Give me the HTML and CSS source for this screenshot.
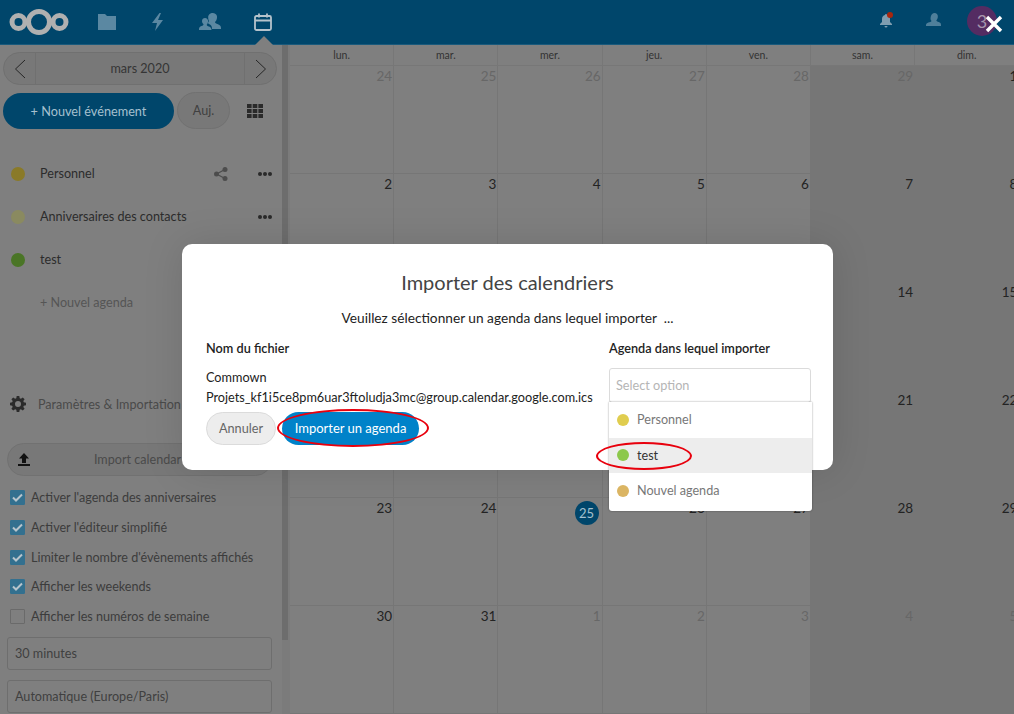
FILE: index.html
```html
<!DOCTYPE html>
<html lang="fr">
<head>
<meta charset="utf-8">
<title>Agenda</title>
<link rel="stylesheet" href="styles.css">
</head>
<body>
<header class="topbar">
  <svg class="logo" width="62" height="30" viewBox="0 0 62 30"><g fill="none" stroke="#b0b0b0"><circle cx="9.500" cy="15" r="6.500" stroke-width="5"/><circle cx="30" cy="15" r="10.500" stroke-width="5"/><circle cx="50.500" cy="15" r="6.500" stroke-width="5"/></g></svg>
  <nav class="apps">
    <svg class="app" width="20" height="20" viewBox="0 0 20 20"><path fill="#5b88a2" d="M1 2h7l2 2h9v14H1z"/></svg>
    <svg class="app" width="20" height="20" viewBox="0 0 20 20"><path fill="#5b88a2" d="M11.500 1 4 11h5l-2 8 8-11h-5l3-7z"/></svg>
    <svg class="app" width="22" height="20" viewBox="0 0 22 20"><path fill="#5b88a2" d="M14 1a4.200 4.200 0 0 1 4 5c-.3 2-1 3-2 4 0 1 1 1.500 3 2.300 2 .8 3 1.700 3 3.700v1h-9c0-3-1-4-3-5-1.500-.7-1-1.500 0-3-.5-1-.8-1.800-.8-3.500C9 3 11 1 14 1zM6 6a3.200 3.200 0 0 1 3 4c-.2 1.300-.6 2-1.300 2.700 0 .8.800 1.200 2.300 1.800 1.500.7 2.500 1.500 2.500 3.500H0v-1c0-1.500.8-2.500 2.500-3 1.500-.5 2-1 2-1.800C3.700 11.500 3 10.500 3 9c0-1.700 1.300-3 3-3z"/></svg>
    <div class="app-active">
      <svg width="18" height="18" viewBox="0 0 18 18"><g fill="none" stroke="#b5c3cc" stroke-width="1.800"><rect x="1" y="3" width="16" height="14" rx="1.500"/><path d="M1 7.500h16M5 .5v4M13 .5v4"/></g></svg>
      <span class="caret"></span>
    </div>
  </nav>
  <div class="top-right">
    <span class="bell">
      <svg width="15" height="15" viewBox="0 0 15 15"><path fill="#7f9db0" d="M7 1a1 1 0 0 1 1 1c2 .5 3 2 3 4v3l2 2v1H1v-1l2-2V6c0-2 1-3.500 3-4a1 1 0 0 1 1-1zM5.500 13h3a1.500 1.500 0 0 1-3 0z"/></svg>
      <span class="bell-dot"></span>
    </span>
    <svg class="people" width="15" height="15" viewBox="0 0 15 15"><path fill="#4f7f9a" d="M8.500 0a3.500 3.500 0 0 1 3.300 4.300c-.2 1.400-.8 2.300-1.400 3 0 1 .9 1.300 2.300 1.800 1.500.6 2.300 1.300 2.300 2.900v1H0v-1c0-1.300 1-2 2.300-2.500 1.300-.5 3.200-.6 3.200-1.500C4.500 7 4.300 5.800 4.800 3.600 5.300 1.300 6.800 0 8.500 0z"/></svg>
    <span class="avatar">3</span>
  </div>
</header>

<main class="app-body">
  <aside class="sidebar">
    <div class="date-pick">
      <span class="date-arrow"><svg width="12" height="20" viewBox="0 0 12 20"><path fill="none" stroke="#262626" d="M11 1 1.500 10 11 19"/></svg></span>
      <span class="date-label">mars 2020</span>
      <span class="date-arrow right"><svg width="12" height="20" viewBox="0 0 12 20"><path fill="none" stroke="#262626" d="M1 1l9.500 9L1 19"/></svg></span>
    </div>
    <div class="actions">
      <span class="new-event">+ Nouvel événement</span>
      <span class="today">Auj.</span>
      <svg class="view" width="16" height="14" viewBox="0 0 16 14"><path fill="#2a2a2a" d="M0 0h4.600v4H0zM5.700 0h4.600v4H5.700zM11.400 0H16v4h-4.600zM0 5h4.600v4H0zM5.700 5h4.600v4H5.700zM11.400 5H16v4h-4.600zM0 10h4.600v4H0zM5.700 10h4.600v4H5.700zM11.400 10H16v4h-4.600z"/></svg>
    </div>
    <ul class="cal-list">
      <li class="cal-row"><i class="cal-dot dot-perso"></i><span class="cal-name">Personnel</span>
        <svg class="share" width="14" height="14" viewBox="0 0 14 14"><g fill="#4d4d4d"><circle cx="11" cy="2.500" r="2.500"/><circle cx="2.500" cy="7" r="2.500"/><circle cx="11" cy="11.500" r="2.500"/></g><path stroke="#4d4d4d" stroke-width="1.300" d="M11 2.500 2.500 7l8.500 4.500" fill="none"/></svg>
        <span class="more"><b></b><b></b><b></b></span></li>
      <li class="cal-row"><i class="cal-dot dot-anniv"></i><span class="cal-name">Anniversaires des contacts</span>
        <span class="more"><b></b><b></b><b></b></span></li>
      <li class="cal-row"><i class="cal-dot dot-test"></i><span class="cal-name">test</span></li>
      <li class="cal-row add-cal">+ Nouvel agenda</li>
    </ul>
    <div class="settings-head">
      <svg width="16" height="16" viewBox="0 0 16 16"><path fill="#2b2b2b" fill-rule="evenodd" d="M6.700 0h2.600l.4 2.200 1.200.5L12.800 1.400l1.800 1.800-1.300 1.900.5 1.200 2.200.4v2.600l-2.200.4-.5 1.200 1.300 1.900-1.800 1.800-1.900-1.300-1.200.5L9.300 16H6.700l-.4-2.200-1.200-.5-1.900 1.300-1.800-1.800 1.300-1.900-.5-1.200L0 9.300V6.700l2.200-.4.500-1.200-1.300-1.900 1.800-1.800 1.900 1.300 1.200-.5zM8 5a3 3 0 1 0 0 6 3 3 0 0 0 0-6z"/></svg>
      <span>Paramètres &amp; Importation</span>
    </div>
    <div class="import-btn">
      <svg width="12" height="13" viewBox="0 0 12 13"><path fill="#111" d="M6 0l5 5.500H8V10H4V5.500H1zM0 11h12v2H0z"/></svg>
      <span>Import calendar</span>
    </div>
    <label class="check on"><i class="box"><svg width="11" height="9" viewBox="0 0 11 9"><path fill="none" stroke="#b7c4cc" stroke-width="2" d="M1 4.500 4 7.500 10 1.500"/></svg></i>Activer l'agenda des anniversaires</label>
    <label class="check on"><i class="box"><svg width="11" height="9" viewBox="0 0 11 9"><path fill="none" stroke="#b7c4cc" stroke-width="2" d="M1 4.500 4 7.500 10 1.500"/></svg></i>Activer l'éditeur simplifié</label>
    <label class="check on"><i class="box"><svg width="11" height="9" viewBox="0 0 11 9"><path fill="none" stroke="#b7c4cc" stroke-width="2" d="M1 4.500 4 7.500 10 1.500"/></svg></i>Limiter le nombre d'évènements affichés</label>
    <label class="check on"><i class="box"><svg width="11" height="9" viewBox="0 0 11 9"><path fill="none" stroke="#b7c4cc" stroke-width="2" d="M1 4.500 4 7.500 10 1.500"/></svg></i>Afficher les weekends</label>
    <label class="check"><i class="box"></i>Afficher les numéros de semaine</label>
    <div class="field first">30 minutes</div>
    <div class="field">Automatique (Europe/Paris)</div>
  </aside>
  <div class="scrollbar"><div class="thumb"></div></div>
  <section class="calendar">
    <div class="cal-inner">
      <div class="head">lun.</div><div class="head">mar.</div><div class="head">mer.</div><div class="head">jeu.</div><div class="head">ven.</div><div class="head">sam.</div><div class="head">dim.</div>
      <div class="day off">24</div><div class="day off">25</div><div class="day off">26</div><div class="day off">27</div><div class="day off">28</div><div class="day off we">29</div><div class="day we">1</div>
      <div class="day">2</div><div class="day">3</div><div class="day">4</div><div class="day">5</div><div class="day">6</div><div class="day we">7</div><div class="day we">8</div>
      <div class="day"></div><div class="day"></div><div class="day"></div><div class="day"></div><div class="day"></div><div class="day we">14</div><div class="day we">15</div>
      <div class="day"></div><div class="day"></div><div class="day"></div><div class="day"></div><div class="day"></div><div class="day we">21</div><div class="day we">22</div>
      <div class="day">23</div><div class="day">24</div><div class="day"><span class="now">25</span></div><div class="day">26</div><div class="day">27</div><div class="day we">28</div><div class="day we">29</div>
      <div class="day">30</div><div class="day">31</div><div class="day off">1</div><div class="day off">2</div><div class="day off">3</div><div class="day off we">4</div><div class="day off we">5</div>
    </div>
  </section>
</main>

<svg class="close" width="18" height="18" viewBox="0 0 18 18"><path stroke="#fff" stroke-width="3.400" d="M2 2l14 14M16 2 2 16"/></svg>

<div class="dialog">
  <h2 class="dlg-title">Importer des calendriers</h2>
  <p class="dlg-sub">Veuillez sélectionner un agenda dans lequel importer &nbsp;...</p>
  <div class="dlg-cols">
    <div class="dlg-file">
      <h3 class="col-head">Nom du fichier</h3>
      <p class="file-name">Commown<br>Projets_kf1i5ce8pm6uar3ftoludja3mc@group.calendar.google.com.ics</p>
      <div class="dlg-btns">
        <span class="btn-cancel">Annuler</span>
        <span class="btn-import">Importer un agenda</span>
      </div>
    </div>
    <div class="dlg-target">
      <h3 class="col-head">Agenda dans lequel importer</h3>
      <div class="select-box">Select option</div>
    </div>
  </div>
</div>
<ul class="dropdown">
  <li class="opt"><i class="opt-dot d1"></i>Personnel</li>
  <li class="opt sel"><i class="opt-dot d2"></i>test</li>
  <li class="opt"><i class="opt-dot d3"></i>Nouvel agenda</li>
</ul>
<span class="ring ring-btn"></span>
<span class="ring ring-opt"></span>
</body>
</html>
```

FILE: styles.css
```css
* { box-sizing: border-box; }
html, body { margin: 0; height: 100%; overflow: hidden; }
body { background: #7f7f7f; font-family: Lato, sans-serif; font-size: 12.600px; color: #2a2a2a; display: flex; flex-direction: column; }
ul { list-style: none; margin: 0; padding: 0; }
i { display: block; }
p, h2, h3 { margin: 0; font-weight: 400; }

.topbar { height: 45px; flex: none; background: #00466b; display: flex; align-items: center; padding-left: 9px; border-bottom: 1px solid #1a5a7c; }
.logo { margin-top: -1px; }
.apps { display: flex; align-items: center; margin-left: 26px; gap: 31px; height: 100%; }
.app { display: block; margin-top: -1px; }
.app-active { position: relative; height: 100%; display: flex; align-items: center; margin-left: 2px; }
.caret { position: absolute; left: 1px; bottom: -1px; width: 0; height: 0; border-left: 9px solid transparent; border-right: 9px solid transparent; border-bottom: 9px solid #7f7f7f; }
.top-right { margin-left: auto; display: flex; align-items: center; padding-right: 17px; }
.bell { position: relative; display: block; height: 15px; margin-top: -3px; }
.bell-dot { position: absolute; left: 8px; top: -1px; width: 6px; height: 6px; border-radius: 50%; background: #a8260d; }
.people { display: block; margin-left: 32px; margin-top: -3px; }
.avatar { width: 30px; height: 30px; margin-left: 26px; margin-top: -2px; border-radius: 50%; background: #542c62; color: #a796ad; font-size: 18px; line-height: 30px; text-align: center; }

.app-body { flex: 1; display: flex; min-height: 0; }
.sidebar { width: 282px; flex: none; overflow: hidden; padding-top: 7px; color: #2c2c2c; }
.scrollbar { width: 8px; flex: none; background: #7b7b7b; }
.thumb { height: 595px; background: #6d6d6d; width: 6px; }

.date-pick { margin: 0 5px 0 3px; height: 33px; display: flex; border: 1px solid #707070; border-radius: 17px; background: #787878; }
.date-arrow { width: 32px; flex: none; display: flex; align-items: center; justify-content: center; border-right: 1px solid #707070; }
.date-arrow.right { border-right: 0; border-left: 1px solid #707070; }
.date-label { flex: 1; text-align: center; line-height: 31px; color: #353535; }
.actions { display: flex; align-items: center; margin: 7px 0 0 3px; }
.new-event { width: 171px; height: 36px; border-radius: 18px; background: #00466b; color: #a5c0cf; text-align: center; line-height: 36px; font-size: 12.700px; }
.today { width: 53px; height: 37px; margin-left: 3px; border: 1px solid #717171; border-radius: 19px; background: #787878; text-align: center; line-height: 35px; color: #404040; }
.view { margin-left: 17px; display: block; }

.cal-list { margin-top: 23px; }
.cal-row { height: 43px; display: flex; align-items: center; padding-left: 11px; }
.cal-dot { width: 14px; height: 14px; border-radius: 50%; margin-right: 15px; flex: none; }
.dot-perso { background: #8a7a28; }
.dot-anniv { background: #8a8a60; }
.dot-test { background: #4a7526; }
.cal-name { flex: 1; }
.share { margin-right: 30px; }
.more { display: flex; gap: 1px; margin-right: 9px; width: 15px; }
.more b { width: 4px; height: 4px; border-radius: 50%; background: #2a2a2a; }
.add-cal { padding-left: 40px; color: #555; }
.settings-head { display: flex; align-items: center; margin-top: 68px; padding-left: 10px; height: 24px; color: #4a4a4a; }
.settings-head span { margin-left: 12px; }
.settings-head svg { display: block; }
.import-btn { display: flex; align-items: center; margin: 27px 10px 0 7px; height: 33px; padding-left: 10px; border: 1px solid #717171; border-radius: 17px; background: #787878; color: #4a4a4a; }
.import-btn span { flex: 1; text-align: center; padding-right: 26px; }
.check { display: flex; align-items: center; height: 29.700px; margin-left: 10px; color: #3c3c3c; }
.check:first-of-type { margin-top: 7px; }
.box { width: 15px; height: 15px; margin-right: 6px; border: 1px solid #6a6a6a; border-radius: 1px; display: flex; align-items: center; justify-content: center; }
.check.on .box { background: #33708f; border-color: #33708f; }
.field { height: 33px; margin: 10px 10px 0 7px; padding-left: 7px; border: 1px solid #6e6e6e; border-radius: 3px; line-height: 31px; color: #404040; }
.field.first { margin-top: 6px; }

.calendar { flex: 1; min-width: 0; overflow: hidden; }
.cal-inner { width: 729.400px; display: grid; grid-template-columns: repeat(7, 104.200px); grid-template-rows: 21px repeat(6, 108px); }
.head { border-right: 1px solid #777; border-bottom: 1px solid #777; text-align: center; font-size: 10.500px; line-height: 20px; color: #333; }
.day { border-right: 1px solid #767676; border-bottom: 1px solid #767676; text-align: right; padding: 1px 1px 0 0; font-size: 13.500px; line-height: 19px; color: #232323; position: relative; }
.day.off { color: #676767; }
.day.we { background: #767676; border-color: #767676; }
.now { position: absolute; right: 3px; top: 3px; width: 24px; height: 24px; line-height: 24px; border-radius: 50%; background: #00466b; color: #a5c0cf; text-align: center; font-size: 13px; }

.close { position: absolute; left: 985px; top: 15px; }
.dialog { position: absolute; left: 182px; top: 244px; width: 651px; height: 226px; background: #fff; border-radius: 10px; box-shadow: 0 0 40px rgba(0,0,0,.12); padding: 25px 24px 0; color: #222; }
.dlg-title { font-size: 20px; line-height: 27px; text-align: center; color: #444; }
.dlg-sub { margin-top: 12px; font-size: 13.700px; line-height: 20px; text-align: center; }
.dlg-cols { display: flex; margin-top: 10px; }
.dlg-file { width: 403px; flex: none; }
.col-head { font-size: 12.700px; line-height: 20px; font-weight: 600; }
.file-name { margin-top: 9px; line-height: 20px; font-size: 12.700px; }
.dlg-btns { display: flex; gap: 6px; margin-top: 5px; }
.btn-cancel { width: 70px; height: 33px; border: 1px solid #dbdbdb; border-radius: 17px; background: #ededed; text-align: center; line-height: 31px; color: #666; font-size: 12.700px; }
.btn-import { width: 137px; height: 33px; border-radius: 17px; background: #0082c9; color: #fff; text-align: center; line-height: 33px; font-size: 13px; }
.dlg-target { width: 203px; }
.select-box { width: 202px; height: 35px; margin-top: 10px; border: 1px solid #dbdbdb; border-radius: 3px; padding-left: 6px; line-height: 33px; color: #b5b5b5; font-size: 12.700px; }
.dropdown { position: absolute; left: 609px; top: 402px; width: 203px; height: 109px; background: #fff; border-radius: 0 0 3px 3px; box-shadow: 0 0 2px rgba(0,0,0,.45); }
.opt { height: 35.500px; display: flex; align-items: center; padding-left: 8px; color: #777; }
.opt.sel { background: #ededed; color: #333; }
.opt-dot { width: 12px; height: 12px; border-radius: 50%; margin-right: 8px; }
.d1 { background: #e0cd4f; }
.d2 { background: #8cc84b; }
.d3 { background: #dbb563; }
.ring { position: absolute; border: 2px solid #e8000d; border-radius: 50%; }
.ring-btn { left: 277px; top: 409px; width: 152px; height: 38px; }
.ring-opt { left: 596px; top: 442px; width: 96px; height: 28px; }
```
